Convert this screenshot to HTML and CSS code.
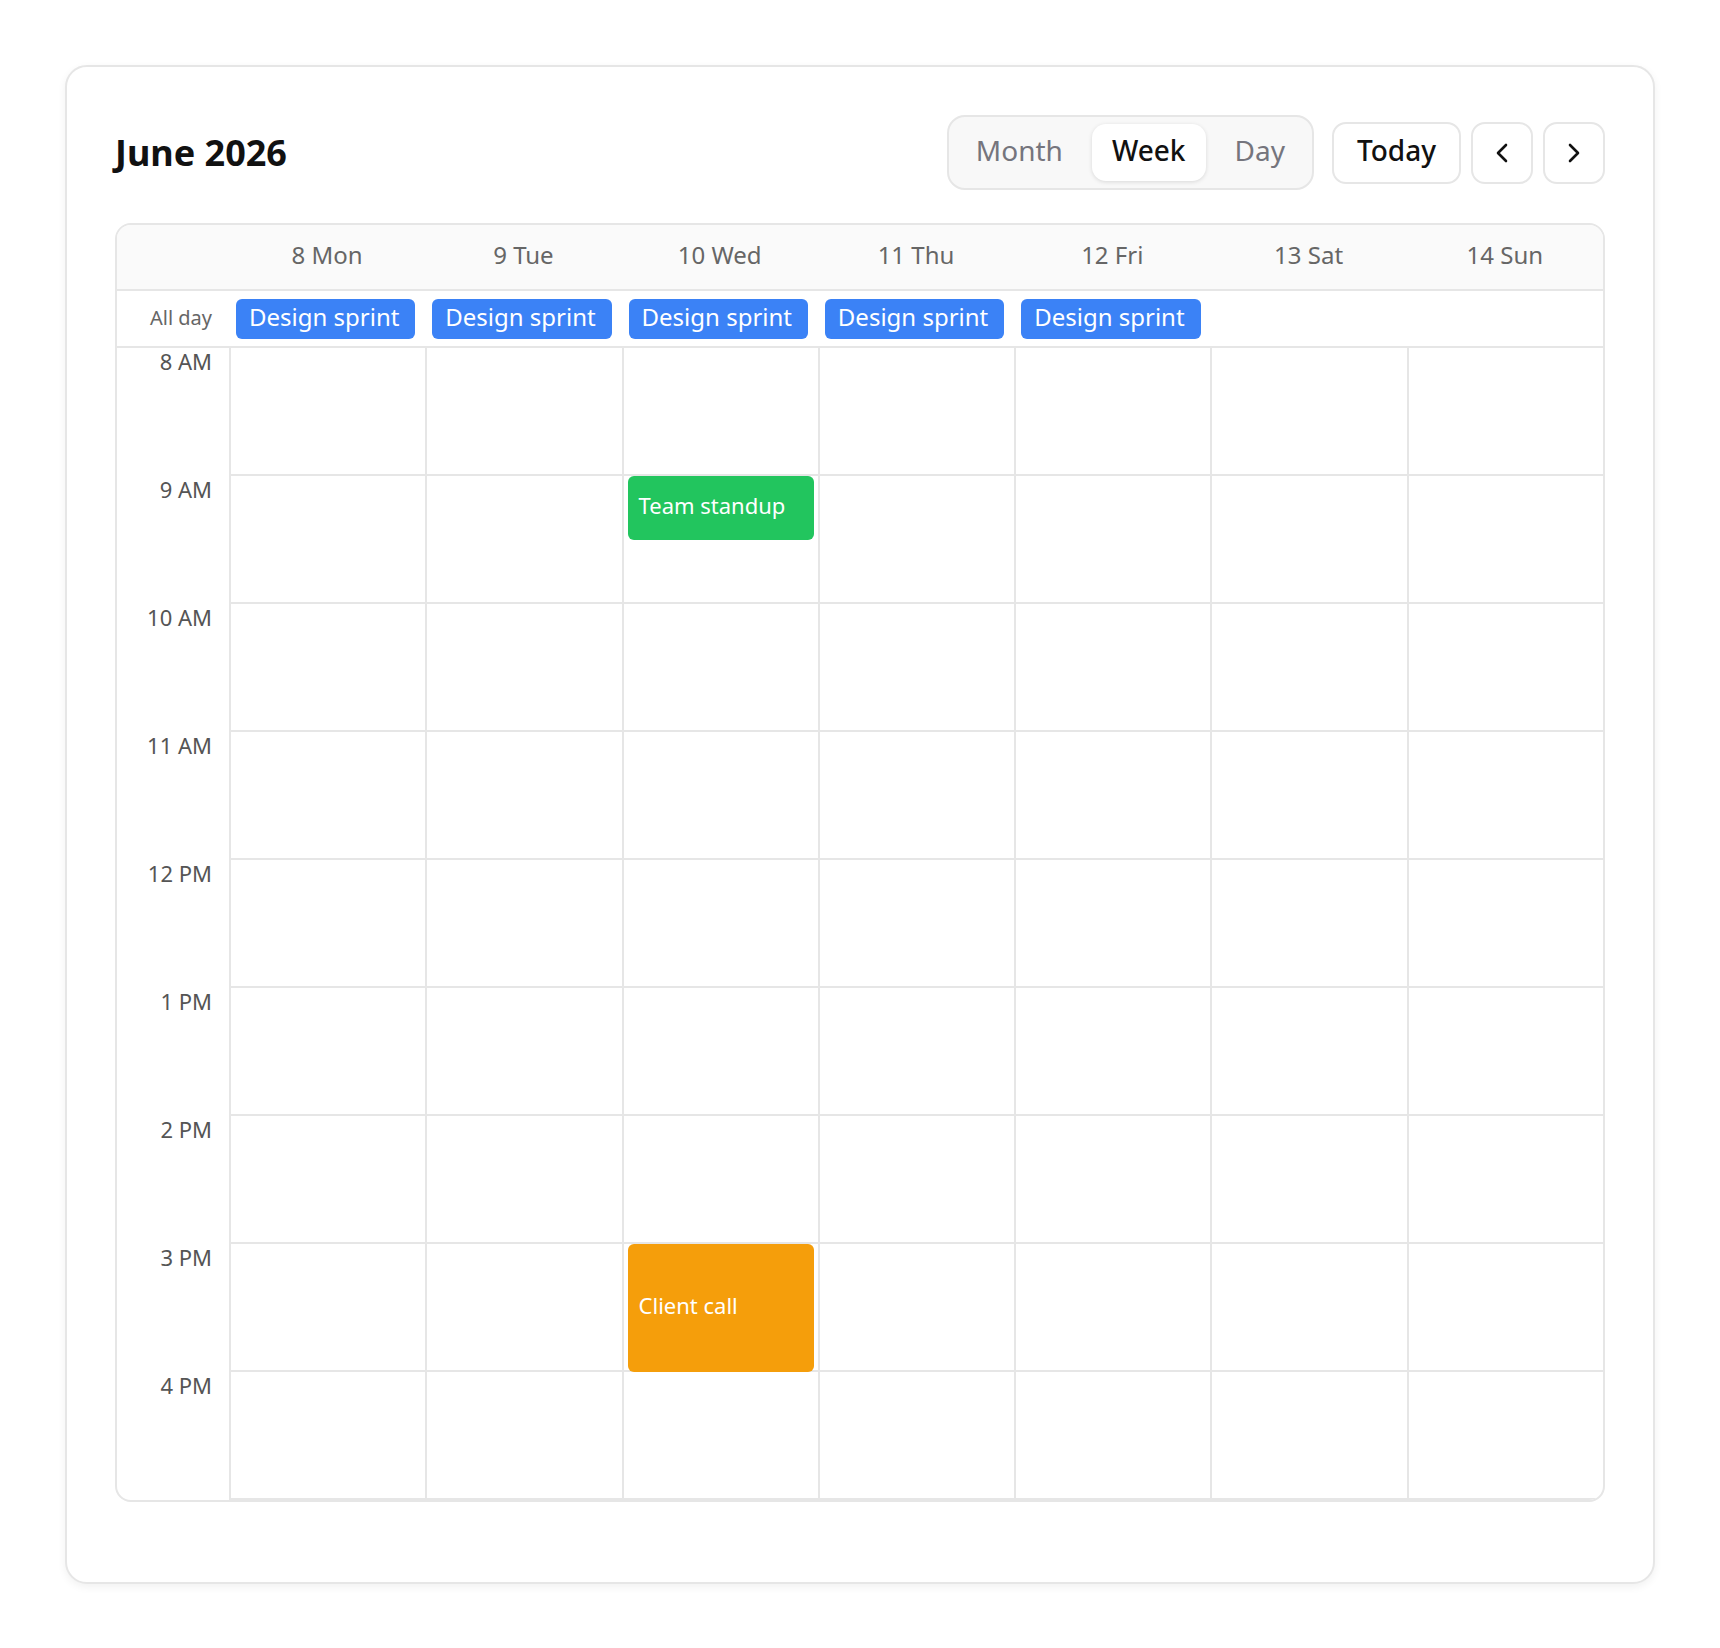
FILE: index.html
```html
<!DOCTYPE html>
<html lang="en">
<head>
    <meta charset="UTF-8">
    <meta name="viewport" content="width=device-width, initial-scale=1.0">
    <title>Calendar</title>
    <link rel="stylesheet" href="styles.css">
</head>
<body>
    <div class="card">
        <div class="toolbar">
            <h1 class="title">June 2026</h1>
            <div class="controls">
                <div class="views">
                    <button>Month</button>
                    <button class="active">Week</button>
                    <button>Day</button>
                </div>
                <div class="nav">
                    <button class="btn">Today</button>
                    <button class="btn btn-icon" aria-label="Previous week">
                        <svg width="14" height="20" viewBox="0 0 14 20"><polyline points="11,2 3,10 11,18" fill="none" stroke="#111" stroke-width="2.6" stroke-linecap="round" stroke-linejoin="round"/></svg>
                    </button>
                    <button class="btn btn-icon" aria-label="Next week">
                        <svg width="14" height="20" viewBox="0 0 14 20"><polyline points="3,2 11,10 3,18" fill="none" stroke="#111" stroke-width="2.6" stroke-linecap="round" stroke-linejoin="round"/></svg>
                    </button>
                </div>
            </div>
        </div>

        <div class="calendar">
            <div class="row cal-head">
                <div></div>
                <div class="day-name">8 Mon</div>
                <div class="day-name">9 Tue</div>
                <div class="day-name">10 Wed</div>
                <div class="day-name">11 Thu</div>
                <div class="day-name">12 Fri</div>
                <div class="day-name">13 Sat</div>
                <div class="day-name">14 Sun</div>
            </div>
            <div class="row cal-allday">
                <div class="allday-label">All day</div>
                <div class="allday-cell"><span class="chip">Design sprint</span></div>
                <div class="allday-cell"><span class="chip">Design sprint</span></div>
                <div class="allday-cell"><span class="chip">Design sprint</span></div>
                <div class="allday-cell"><span class="chip">Design sprint</span></div>
                <div class="allday-cell"><span class="chip">Design sprint</span></div>
                <div class="allday-cell"></div>
                <div class="allday-cell"></div>
            </div>
            <div class="row cal-body" id="body">
                <div class="times" id="times"></div>
            </div>
        </div>
    </div>

    <script>
        var hours = ["8 AM","9 AM","10 AM","11 AM","12 PM","1 PM","2 PM","3 PM","4 PM"];
        var slotH = 128;
        // start is hours after 8 AM
        var events = [
            {day: 2, start: 1, len: 0.5, title: "Team standup", cls: "green"},
            {day: 2, start: 7, len: 1, title: "Client call", cls: "orange"}
        ];

        var oTimes = document.getElementById("times");
        var oBody = document.getElementById("body");

        for (var i = 0; i < hours.length; ++i) {
            var t = document.createElement("div");
            t.className = "time";
            t.textContent = hours[i];
            oTimes.appendChild(t);
        }

        for (var d = 0; d < 7; ++d) {
            var col = document.createElement("div");
            col.className = "day";
            for (var h = 0; h < hours.length; ++h) {
                var s = document.createElement("div");
                s.className = "slot";
                col.appendChild(s);
            }
            for (var e = 0; e < events.length; ++e) {
                var ev = events[e];
                if (ev.day != d) continue;
                var box = document.createElement("div");
                box.className = "event " + ev.cls;
                box.style.top = (ev.start * slotH) + "px";
                box.style.height = (ev.len * slotH) + "px";
                box.textContent = ev.title;
                col.appendChild(box);
            }
            oBody.appendChild(col);
        }
    </script>
</body>
</html>
```

FILE: styles.css
```css
*{
    box-sizing: border-box;
}

body{
    margin: 0;
    padding: 65px;
    background: #fff;
    font-family: "Noto Sans", "Open Sans", sans-serif;
    color: #111;
}

button{
    font-family: inherit;
    cursor: pointer;
}

.card{
    border: 2px solid #e6e6e6;
    border-radius: 22px;
    padding: 48px 48px 80px;
    background: #fff;
    box-shadow: 0 3px 8px rgba(0,0,0,0.06);
}

/* top bar */
.toolbar{
    display: flex;
    justify-content: space-between;
    align-items: center;
    margin-bottom: 33px;
}

.title{
    margin: 0;
    font-size: 36px;
    font-weight: 700;
    color: #111;
}

.controls{
    display: flex;
    align-items: center;
    gap: 18px;
}

.views{
    display: flex;
    gap: 9px;
    padding: 7px;
    border: 2px solid #e6e6e6;
    border-radius: 18px;
    background: #f8f8f8;
}

.views button{
    height: 57px;
    padding: 0 20px 5px;
    border: none;
    border-radius: 14px;
    background: none;
    font-size: 28px;
    color: #75757d;
}

.views .active{
    background: #fff;
    color: #111;
    font-weight: 500;
    box-shadow: 0 1px 4px rgba(0,0,0,0.13);
}

.nav{
    display: flex;
    gap: 10px;
}

.btn{
    height: 62px;
    padding: 0 23px 5px;
    border: 2px solid #e6e6e6;
    border-radius: 14px;
    background: #fff;
    font-size: 28px;
    font-weight: 500;
    color: #111;
}

.btn-icon{
    width: 62px;
    padding: 0;
    display: flex;
    align-items: center;
    justify-content: center;
}

/* week grid */
.calendar{
    border: 2px solid #e6e6e6;
    border-radius: 16px;
    overflow: hidden;
}

.row{
    display: grid;
    grid-template-columns: 112px repeat(7, 1fr);
}

.cal-head{
    height: 66px;
    padding-bottom: 6px;
    align-items: center;
    background: #fafafa;
    border-bottom: 2px solid #e6e6e6;
}

.day-name{
    text-align: center;
    font-size: 24px;
    color: #666;
}

.cal-allday{
    height: 57px;
    align-items: center;
    border-bottom: 2px solid #e6e6e6;
}

.allday-label{
    text-align: right;
    padding-right: 17px;
    padding-bottom: 2px;
    font-size: 20px;
    color: #666;
}

.allday-cell{
    padding-left: 7px;
}

.chip{
    display: inline-block;
    height: 40px;
    line-height: 36px;
    padding: 0 16px 0 13px;
    border-radius: 6px;
    background: #3b82f6;
    color: #fff;
    font-size: 24px;
}

.time{
    height: 128px;
    padding-right: 17px;
    text-align: right;
    font-size: 22px;
    line-height: 26px;
    color: #555;
}

.day{
    position: relative;
    border-left: 2px solid #e6e6e6;
}

.slot{
    height: 128px;
    border-bottom: 2px solid #e6e6e6;
}

.event{
    position: absolute;
    left: 4px;
    right: 4px;
    display: flex;
    align-items: center;
    padding: 0 0 7px 11px;
    border-radius: 6px;
    color: #fff;
    font-size: 22px;
}

.green{
    background: #22c55e;
}

.orange{
    background: #f59e0b;
}
```
